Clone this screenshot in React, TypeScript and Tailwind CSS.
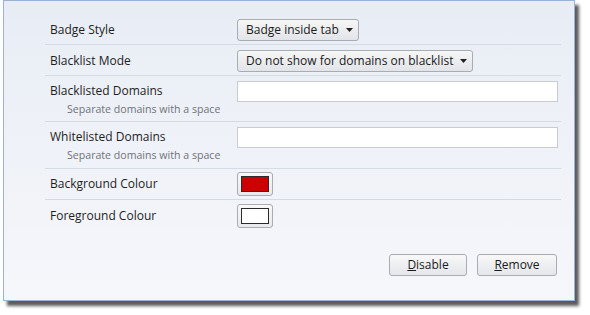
import React from "react";

function Caret() {
  return (
    <svg width="7" height="4" viewBox="0 0 7 4" className="ml-[7px] shrink-0">
      <path d="M0 0H7L3.5 4Z" fill="#222" />
    </svg>
  );
}

function Select({ label }: { label: string }) {
  return (
    <div className="flex h-[22px] items-center whitespace-nowrap rounded-[3px] border border-[#a9acb2] bg-gradient-to-b from-[#f6f6f6] to-[#e2e4e8] pl-[8px] pr-[5px] text-[12px] text-[#1b1b1b]">
      <span>{label}</span>
      <Caret />
    </div>
  );
}

function Swatch({ color }: { color: string }) {
  return (
    <div className="flex h-[24px] w-[36px] items-center justify-center rounded-[3px] border border-[#a9acb2] bg-gradient-to-b from-[#f8f8f8] to-[#e8e9ec]">
      <div className="h-[16px] w-[28px] border border-[#2a2a2a]" style={{ background: color }} />
    </div>
  );
}

export default function App() {
  return (
    <div
      className="h-[315px] w-[590px] bg-white pl-[3px]"
      style={{ fontFamily: '"Open Sans", "Noto Sans", sans-serif' }}
    >
      <div className="relative flex h-[301px] w-[572px] flex-col border border-[#9db3d3] bg-gradient-to-b from-[#e8edf5] to-[#f6f7fb] pt-[13px] shadow-[4px_5px_3px_rgba(50,50,50,0.8)]">
        <div className="ml-[41px] mr-[13px] flex flex-col text-[12px] text-[#1e1e1e]">
          <div className="flex items-center border-b border-[#d6dbe3] pb-[3px] pt-[5px]">
            <div className="w-[192px] pl-[5px]">Badge Style</div>
            <Select label="Badge inside tab" />
          </div>
          <div className="flex items-center border-b border-[#d6dbe3] pb-[3px] pt-[5px]">
            <div className="w-[192px] pl-[5px]">Blacklist Mode</div>
            <Select label="Do not show for domains on blacklist" />
          </div>
          <div className="flex h-[46px] border-b border-[#d6dbe3] pt-[5px]">
            <div className="flex w-[192px] flex-col pl-[5px]">
              <div className="flex h-[20px] items-center">Blacklisted Domains</div>
              <div className="flex h-[18px] items-center whitespace-nowrap pl-[17px] text-[10.6px] text-[#6f7378]">
                Separate domains with a space
              </div>
            </div>
            <div className="h-[21px] w-[321px] border border-[#c8ccd2] bg-white" />
          </div>
          <div className="flex h-[47px] border-b border-[#d6dbe3] pt-[5px]">
            <div className="flex w-[192px] flex-col pl-[5px]">
              <div className="flex h-[20px] items-center">Whitelisted Domains</div>
              <div className="flex h-[18px] items-center whitespace-nowrap pl-[17px] text-[10.6px] text-[#6f7378]">
                Separate domains with a space
              </div>
            </div>
            <div className="h-[21px] w-[321px] border border-[#c8ccd2] bg-white" />
          </div>
          <div className="flex items-center border-b border-[#d6dbe3] pb-[3px] pt-[3px]">
            <div className="w-[192px] pl-[5px]">Background Colour</div>
            <Swatch color="#cc0000" />
          </div>
          <div className="flex items-center pt-[4px]">
            <div className="w-[192px] pl-[5px]">Foreground Colour</div>
            <Swatch color="#ffffff" />
          </div>
        </div>
        <div className="mr-[17px] mt-[26px] flex justify-end gap-[10px] text-[12px] text-[#1b1b1b]">
          <div className="flex h-[22px] w-[78px] items-center justify-center rounded-[3px] border border-[#a9acb2] bg-gradient-to-b from-[#f8f8f8] to-[#e4e6ea]">
            <span><span className="underline">D</span>isable</span>
          </div>
          <div className="flex h-[22px] w-[80px] items-center justify-center rounded-[3px] border border-[#a9acb2] bg-gradient-to-b from-[#f8f8f8] to-[#e4e6ea]">
            <span><span className="underline">R</span>emove</span>
          </div>
        </div>
      </div>
    </div>
  );
}
